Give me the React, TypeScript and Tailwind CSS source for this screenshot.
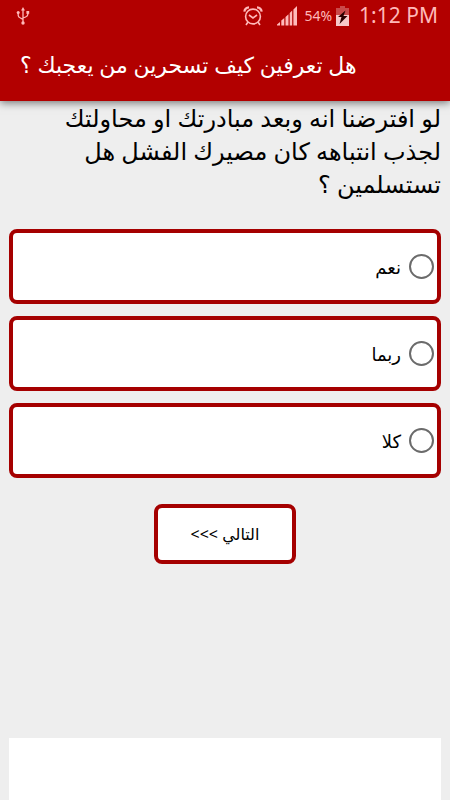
import React, { useState } from 'react';

const question = {
  title: 'هل تعرفين كيف تسحرين من يعجبك ؟',
  text: 'لو افترضنا انه وبعد مبادرتك او محاولتك لجذب انتباهه كان مصيرك الفشل هل تستسلمين ؟',
  answers: [
    { value: 'yes', label: 'نعم' },
    { value: 'maybe', label: 'ربما' },
    { value: 'no', label: 'كلا' }
  ]
};

const UsbIcon = () => (
  <svg viewBox="0 0 14 18" className="w-[14px] h-[18px]" fill="none" stroke="currentColor" strokeWidth="1.3" aria-hidden="true">
    <path d="M7 3v12M2.2 6v2.6c0 1.4 1 2 2.2 2.4L7 12.4M11.8 6v1.6c0 1.4-1 2-2.2 2.4L7 11" />
    <path d="M7 0l2 3.4H5z" fill="currentColor" stroke="none" />
    <circle cx="2.2" cy="5.5" r="1.5" fill="currentColor" stroke="none" />
    <path d="M10.4 4h2.8v2.8h-2.8z" fill="currentColor" stroke="none" />
    <circle cx="7" cy="16" r="1.7" fill="currentColor" stroke="none" />
  </svg>
);

const AlarmIcon = () => (
  <svg viewBox="0 0 20 20" className="size-5" fill="none" stroke="currentColor" strokeWidth="1.6" aria-hidden="true">
    <circle cx="10" cy="10.5" r="7.4" />
    <path d="M6 9l4 3 4-3" />
    <path d="M1.3 5.6A5 5 0 0 1 6 1.4M18.7 5.6A5 5 0 0 0 14 1.4" strokeWidth="2.2" />
    <path d="M5 16l-2 3M15 16l2 3" />
  </svg>
);

const SignalIcon = () => (
  <svg viewBox="0 0 20 20" className="size-5" fill="currentColor" aria-hidden="true">
    <path d="M0 19.5v-1l3-2.5v3.5zM4.3 19.5v-5l3-2.5v7.5zM8.5 19.5V11l3-2.8v11.3zM12.7 19.5V7l2.5-2.5v15zM16.4 19.5v-16L20 0v19.5z" />
  </svg>
);

const BatteryIcon = () => (
  <svg viewBox="0 0 13 20" className="w-[13px] h-5" aria-hidden="true">
    <path d="M4 0h5v2h4v7H0V2h4z" fill="#c94a4a" />
    <path d="M0 9h13v11H0z" fill="#f7c9c9" />
    <path d="M9.5 4.5L2 11h3.5l-2 7 8-8h-4z" fill="#2a0000" />
  </svg>
);

const StatusBar = () => (
  <div className="flex items-center justify-between h-8 pl-4 pr-3 text-[#ffb9b9]">
    <UsbIcon />
    <div className="flex items-center">
      <div className="flex gap-[14px]">
        <AlarmIcon />
        <SignalIcon />
      </div>
      <span className="pl-[7px] pr-1 text-sm">54%</span>
      <BatteryIcon />
      <span className="pl-[10px] text-[21px]">1:12 PM</span>
    </div>
  </div>
);

export default function App() {
  const [answer, setAnswer] = useState('');

  return (
    <div className="flex flex-col min-h-screen bg-[#eeeeee] text-black font-['Noto_Sans','DejaVu_Sans',sans-serif]">
      <header className="relative bg-[#b20000] shadow-[0_2px_8px_rgba(0,0,0,0.5)]">
        <StatusBar />
        <div className="px-5 pt-4 pb-[21px]">
          <h1 dir="rtl" className="w-fit text-[22px] leading-8 text-white">{question.title}</h1>
        </div>
      </header>

      <main dir="rtl" className="flex flex-col flex-1 px-[9px]">
        <form className="flex flex-col items-center" onSubmit={e => e.preventDefault()}>
          <fieldset className="w-full">
            <legend className="pb-[29px] text-2xl leading-[33px]">{question.text}</legend>
            <div className="flex flex-col gap-3">
              {question.answers.map(item => (
                <label
                  key={item.value}
                  className="flex items-center gap-2 h-[75px] px-[3px] bg-white border-4 border-[#a50000] rounded-lg cursor-pointer"
                >
                  <input
                    type="radio"
                    name="answer"
                    value={item.value}
                    checked={answer === item.value}
                    onChange={() => setAnswer(item.value)}
                    className="appearance-none size-[25px] border-2 border-[#6b6b6b] rounded-full checked:border-8 checked:border-[#a50000]"
                  />
                  <span className="text-lg">{item.label}</span>
                </label>
              ))}
            </div>
          </fieldset>

          <button
            type="submit"
            className="w-[142px] h-[60px] mt-[26px] bg-white border-4 border-[#a50000] rounded-lg text-base cursor-pointer"
          >
            {'التالي >>>'}
          </button>
        </form>

        <div className="h-[62px] mt-auto bg-white" />
      </main>
    </div>
  );
}
